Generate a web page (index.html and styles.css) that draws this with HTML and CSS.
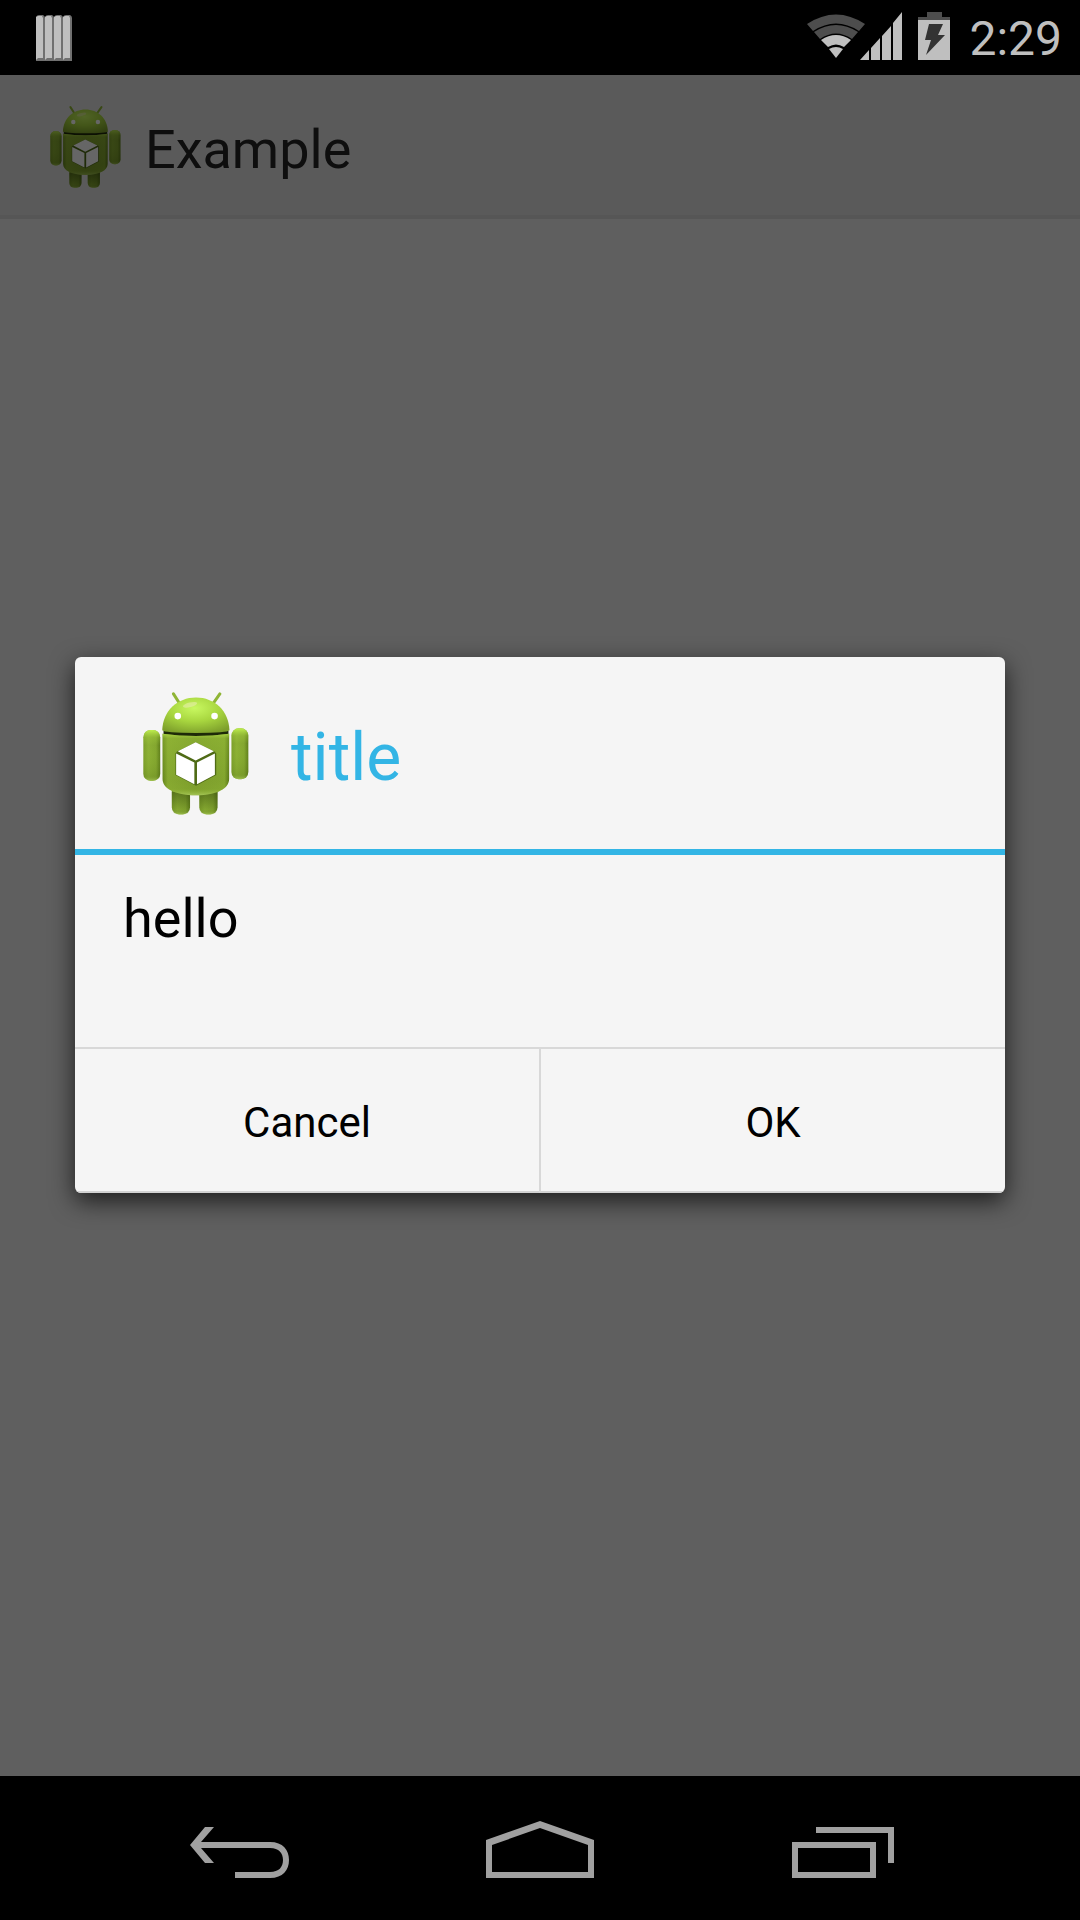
FILE: index.html
```html
<!DOCTYPE html>
<html lang="en">
<head>
<meta charset="utf-8">
<meta name="viewport" content="width=device-width, initial-scale=1">
<title>Example</title>
<link rel="stylesheet" href="styles.css">
</head>
<body>
<svg class="defs" aria-hidden="true">
  <defs>
    <radialGradient id="head-fill" cx="0.48" cy="0.3" r="0.75">
      <stop offset="0" stop-color="#c8f860"/>
      <stop offset="0.5" stop-color="#a8d63f"/>
      <stop offset="1" stop-color="#7d9f2b"/>
    </radialGradient>
    <linearGradient id="body-fill" x1="0" x2="1" y1="0" y2="0">
      <stop offset="0" stop-color="#64851c"/>
      <stop offset="0.08" stop-color="#86a830"/>
      <stop offset="0.5" stop-color="#7c9d2b"/>
      <stop offset="0.93" stop-color="#82a52f"/>
      <stop offset="1" stop-color="#5a7a18"/>
    </linearGradient>
    <linearGradient id="body-light" x1="0" x2="0" y1="0" y2="1">
      <stop offset="0" stop-color="#b4e24a" stop-opacity="0.8"/>
      <stop offset="0.08" stop-color="#a0c83c" stop-opacity="0.3"/>
      <stop offset="0.75" stop-color="#9cc23c" stop-opacity="0"/>
      <stop offset="0.9" stop-color="#9cc23c" stop-opacity="0.1"/>
      <stop offset="1" stop-color="#b4d468" stop-opacity="0.7"/>
    </linearGradient>
    <linearGradient id="arm-fill" x1="0" x2="1" y1="0" y2="0">
      <stop offset="0" stop-color="#7c9f2a"/>
      <stop offset="0.3" stop-color="#8cb034"/>
      <stop offset="0.75" stop-color="#83a62f"/>
      <stop offset="1" stop-color="#5e7d1a"/>
    </linearGradient>
    <linearGradient id="arm-light" x1="0" x2="0" y1="0" y2="1">
      <stop offset="0" stop-color="#c0f050"/>
      <stop offset="0.15" stop-color="#a8d440" stop-opacity="0.3"/>
      <stop offset="0.3" stop-color="#a8d440" stop-opacity="0"/>
      <stop offset="0.9" stop-color="#506c14" stop-opacity="0.2"/>
      <stop offset="1" stop-color="#b4d468" stop-opacity="0.6"/>
    </linearGradient>
    <linearGradient id="leg-shade" x1="0" x2="0" y1="0" y2="1">
      <stop offset="0" stop-color="#3c5210" stop-opacity="0.6"/>
      <stop offset="0.8" stop-color="#3c5210" stop-opacity="0.1"/>
      <stop offset="1" stop-color="#b4d468" stop-opacity="0.5"/>
    </linearGradient>
    <symbol id="robot" viewBox="0 0 320 370">
      <path d="M92 5 109 32M232 5 213 32" stroke="#8fb535" stroke-width="9" stroke-linecap="round"/>
      <rect x="87" y="270" width="55" height="99" rx="22" fill="url(#arm-fill)"/>
      <rect x="170" y="270" width="55" height="99" rx="22" fill="url(#arm-fill)"/>
      <path d="M87 300H142V347Q142 369 120 369H109Q87 369 87 347ZM170 300H225V347Q225 369 203 369H192Q170 369 170 347Z" fill="url(#leg-shade)"/>
      <rect x="1" y="114" width="51" height="154" rx="22" fill="url(#arm-fill)"/>
      <rect x="1" y="114" width="51" height="154" rx="22" fill="url(#arm-light)"/>
      <rect x="267" y="109" width="51" height="154" rx="22" fill="url(#arm-fill)"/>
      <rect x="267" y="109" width="51" height="154" rx="22" fill="url(#arm-light)"/>
      <path d="M62 116H258V130Q160 140 62 130Z" fill="#1e2a08"/>
      <path d="M59 125Q160 139 260 125V262C260 290 225 311 160 311S59 290 59 262Z" fill="url(#body-fill)"/>
      <path d="M59 125Q160 139 260 125V262C260 290 225 311 160 311S59 290 59 262Z" fill="url(#body-light)"/>
      <path d="M58 115C60 56 104 16 160 16S259 56 261 115Q256 123 160 123T58 115Z" fill="url(#head-fill)"/>
      <ellipse cx="142" cy="38" rx="22" ry="7" transform="rotate(-14 142 38)" fill="#e6ecaa" opacity="0.6"/>
      <circle cx="105" cy="72" r="10" fill="#fff"/>
      <circle cx="216" cy="72" r="10" fill="#fff"/>
      <path d="M159 151 214 178 221 184V250L160 282 98 250V184L105 178Z" fill="#4f6b16"/>
      <path d="M159 151 214 178 159 206 105 178ZM100 185 155 212V278L100 249ZM163 212 217 185V249L163 278Z" fill="#fff"/>
    </symbol>
  </defs>
</svg>
<div class="screen">
  <header class="status-bar">
    <svg class="status-note" viewBox="0 0 36 46" aria-label="Notifications">
      <path d="M0 2Q1 0 3 0H7Q9 1 9 3V46H0ZM9 2Q10 0 12 0H16Q18 1 18 3V46H9ZM18 2Q19 0 21 0H25Q27 1 27 3V46H18ZM27 2Q28 0 30 0H34Q36 1 36 3V46H27Z" fill="#707070"/>
      <path d="M0 2 2 1H6L7 3V43H2L0 45ZM9 2 11 1H15L16 3V43H11L9 45ZM18 2 20 1H24L25 3V43H20L18 45ZM27 2 29 1H33L34 3V43H29L27 45Z" fill="#bfbfbf"/>
    </svg>
    <div class="status-icons">
      <svg class="status-signals" viewBox="0 0 144 48" aria-label="Wi-Fi, signal, battery charging">
        <path d="M0 12Q29 -7 58 12L52 19Q29 4 6 19Z" fill="#4d4d4d"/>
        <path d="M7 20Q29 6 51 20L45 27Q29 16 13 27Z" fill="#4d4d4d"/>
        <path d="M14 28Q29 18 44 28L37 35Q29 30 21 35Z" fill="#bfbfbf"/>
        <path d="M22 37Q29 33 36 37L29 46Z" fill="#bfbfbf"/>
        <path d="M53 48 62 38V48ZM64 36 73 26V48H64ZM75 24 84 14V48H75ZM86 11 95 0V48H86Z" fill="#bfbfbf"/>
        <path d="M120 0H135V5H143V8H111V5H120Z" fill="#4d4d4d"/>
        <path d="M111 8H143V48H111Z" fill="#bfbfbf"/>
        <path d="M122 12H136L131 23H138L119 43 124 28H118Z" fill="#333"/>
      </svg>
      <time class="clock">2:29</time>
    </div>
  </header>
  <main class="app">
    <div class="action-bar">
      <svg class="app-icon" aria-hidden="true"><use href="#robot"/></svg>
      <h1 class="app-title">Example</h1>
    </div>
    <div class="scrim">
      <section class="dialog" role="dialog" aria-labelledby="dialog-title">
        <div class="dialog-head">
          <svg class="dialog-icon" aria-hidden="true"><use href="#robot"/></svg>
          <h2 class="dialog-title" id="dialog-title">title</h2>
        </div>
        <p class="dialog-message">hello</p>
        <div class="dialog-actions">
          <button class="dialog-button" type="button">Cancel</button>
          <button class="dialog-button" type="button">OK</button>
        </div>
      </section>
    </div>
  </main>
  <nav class="nav-bar">
    <button class="nav-button" type="button" aria-label="Back">
      <svg class="nav-icon" viewBox="0 0 108 60">
        <path d="M8 24 23 6H32L19 21H88C101 21 107 29 107 39S101 57 88 57H53V51H88C97 51 101 46 101 39S97 27 88 27H19L32 42H23Z" fill="#a0a0a0"/>
      </svg>
    </button>
    <button class="nav-button" type="button" aria-label="Home">
      <svg class="nav-icon" viewBox="0 0 108 60">
        <path d="M0 19 54 0 108 19V57H0ZM6 24V51H102V24L54 7Z" fill="#a0a0a0" fill-rule="evenodd"/>
      </svg>
    </button>
    <button class="nav-button" type="button" aria-label="Recent apps">
      <svg class="nav-icon" viewBox="0 0 108 60">
        <path d="M26 6H104V42H98V12H26ZM2 21H86V57H2ZM8 27V51H80V27Z" fill="#a0a0a0" fill-rule="evenodd"/>
      </svg>
    </button>
  </nav>
</div>
</body>
</html>
```

FILE: styles.css
```css
* {
  box-sizing: border-box;
}

body {
  margin: 0;
  background: #000;
  font-family: Roboto, "Liberation Sans", sans-serif;
}

h1,
h2,
p {
  margin: 0;
  font-weight: 400;
}

button {
  border: 0;
  padding: 0;
  background: none;
  font: inherit;
  color: inherit;
}

.defs {
  position: absolute;
  width: 0;
  height: 0;
}

.screen {
  display: flex;
  flex-direction: column;
  min-height: 100vh;
}

.status-bar {
  display: flex;
  align-items: center;
  justify-content: space-between;
  height: 75px;
  padding: 0 18px 0 36px;
  background: #000;
}

.status-note {
  width: 36px;
  height: 46px;
}

.status-icons {
  display: flex;
  align-items: flex-start;
  gap: 18px;
  height: 75px;
  padding-top: 12px;
}

.status-signals {
  width: 144px;
  height: 48px;
}

.clock {
  color: #bfbfbf;
  font-size: 48px;
  line-height: 54px;
}

.app {
  position: relative;
  flex: 1;
  background: #eee;
}

.action-bar {
  display: flex;
  align-items: center;
  gap: 24px;
  height: 144px;
  padding: 4px 50px 0;
  border-bottom: 4px solid #d8d8d8;
  background: #e2e2e2;
}

.app-icon {
  width: 71px;
  height: 82px;
}

.app-title {
  padding-top: 4px;
  color: #232323;
  font-size: 54px;
}

.scrim {
  position: absolute;
  inset: 0;
  display: flex;
  align-items: center;
  padding: 0 75px 2px;
  background: rgba(0, 0, 0, 0.6);
}

.dialog {
  flex: 1;
  overflow: hidden;
  border-radius: 6px;
  background: #f5f5f5;
  box-shadow: 0 8px 24px rgba(0, 0, 0, 0.7);
}

.dialog-head {
  display: flex;
  align-items: center;
  gap: 42px;
  height: 198px;
  padding: 2px 68px 0;
  border-bottom: 6px solid #33b5e5;
}

.dialog-icon {
  width: 106px;
  height: 123px;
}

.dialog-title {
  padding-top: 8px;
  color: #33b5e5;
  font-size: 66px;
}

.dialog-message {
  min-height: 192px;
  padding: 32px 48px;
  font-size: 54px;
  line-height: 64px;
}

.dialog-actions {
  display: flex;
  border-top: 2px solid #d8d8d8;
}

.dialog-button {
  flex: 1;
  height: 144px;
  padding-top: 6px;
  border-bottom: 2px solid #d2d2d2;
  font-size: 42px;
}

.dialog-button + .dialog-button {
  border-left: 2px solid #d8d8d8;
}

.nav-bar {
  display: flex;
  justify-content: center;
  height: 144px;
  padding: 6px 84px 0;
  background: #000;
}

.nav-button {
  display: flex;
  flex: 1;
  align-items: center;
  justify-content: center;
}

.nav-icon {
  width: 108px;
  height: 60px;
}
```
